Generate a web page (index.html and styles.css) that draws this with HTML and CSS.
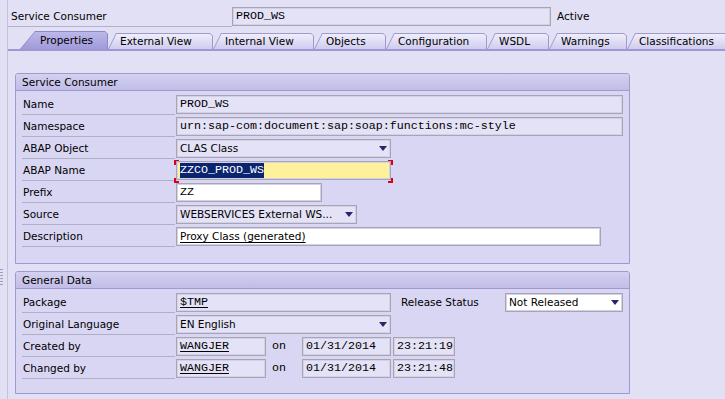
FILE: index.html
```html
<!DOCTYPE html>
<html lang="en">
<head>
    <meta charset="UTF-8">
    <title>Service Consumer</title>
    <link rel="stylesheet" href="styles.css">
</head>
<body>

    <div class="side"><div class="grip"></div></div>

    <div class="main">
        <!-- Header line -->
        <div class="head">
            <div class="head-label">Service Consumer</div>
            <div class="fld mono head-fld">PROD_WS</div>
            <div class="status">Active</div>
        </div>

        <!-- Tab strip -->
        <div class="tabs">
            <div class="tab active t-props"><span>Properties</span></div>
            <div class="tab t-ext"><span>External View</span></div>
            <div class="tab t-int"><span>Internal View</span></div>
            <div class="tab t-obj"><span>Objects</span></div>
            <div class="tab t-conf"><span>Configuration</span></div>
            <div class="tab t-wsdl"><span>WSDL</span></div>
            <div class="tab t-warn"><span>Warnings</span></div>
            <div class="tab t-class"><span>Classifications</span></div>
        </div>

        <div class="panel">
            <!-- Service Consumer group -->
            <div class="group">
                <div class="group-title">Service Consumer</div>
                <div class="group-body">
                    <div class="row">
                        <div class="lbl">Name</div>
                        <div class="fld mono f-wide">PROD_WS</div>
                    </div>
                    <div class="row">
                        <div class="lbl">Namespace</div>
                        <div class="fld mono f-wide">urn:sap-com:document:sap:soap:functions:mc-style</div>
                    </div>
                    <div class="row">
                        <div class="lbl">ABAP Object</div>
                        <div class="fld dd f-mid">CLAS Class</div>
                    </div>
                    <div class="row">
                        <div class="lbl">ABAP Name</div>
                        <div class="focus">
                            <div class="fld mono edit-hi f-mid"><span class="sel">ZZCO_PROD_WS</span></div>
                        </div>
                    </div>
                    <div class="row">
                        <div class="lbl">Prefix</div>
                        <div class="fld mono edit f-prefix">ZZ</div>
                    </div>
                    <div class="row">
                        <div class="lbl">Source</div>
                        <div class="fld dd f-source">WEBSERVICES External WS...</div>
                    </div>
                    <div class="row">
                        <div class="lbl">Description</div>
                        <div class="fld edit f-desc"><u>Proxy Class (generated)</u></div>
                    </div>
                </div>
            </div>

            <!-- General Data group -->
            <div class="group group-gap">
                <div class="group-title">General Data</div>
                <div class="group-body short">
                    <div class="row">
                        <div class="lbl">Package</div>
                        <div class="fld mono f-mid"><u>$TMP</u></div>
                        <div class="side-lbl">Release Status</div>
                        <div class="fld dd edit f-status">Not Released</div>
                    </div>
                    <div class="row">
                        <div class="lbl">Original Language</div>
                        <div class="fld dd f-mid">EN English</div>
                    </div>
                    <div class="row">
                        <div class="lbl">Created by</div>
                        <div class="fld mono f-user"><u>WANGJER</u></div>
                        <div class="on mono">on</div>
                        <div class="fld mono f-date">01/31/2014</div>
                        <div class="fld mono f-time">23:21:19</div>
                    </div>
                    <div class="row">
                        <div class="lbl">Changed by</div>
                        <div class="fld mono f-user"><u>WANGJER</u></div>
                        <div class="on mono">on</div>
                        <div class="fld mono f-date">01/31/2014</div>
                        <div class="fld mono f-time">23:21:48</div>
                    </div>
                </div>
            </div>
        </div>
    </div>

</body>
</html>
```

FILE: styles.css
```css
body {
    margin: 0;
    height: 399px;
    overflow: hidden;
    display: flex;
    background-color: #e2e0f4;
    font-family: "DejaVu Sans", Tahoma, sans-serif;
    font-size: 10.5px;
    color: #000;
}

.mono {
    font-family: "Liberation Mono", "Courier New", monospace;
    font-size: 11.67px;
}

u {
    text-underline-offset: 2px;
}

/* left splitter strip */
.side {
    width: 7px;
    flex: none;
    border-right: 1px solid #c4c2d9;
}

.grip {
    margin-top: 269px;
    width: 3px;
    height: 18px;
    background-image: repeating-linear-gradient(to bottom, #a09eb6 0 1px, transparent 1px 3px);
}

.main {
    flex: 1;
    min-width: 0;
    display: flex;
    flex-direction: column;
}

/* header line */
.head {
    height: 31px;
    box-sizing: border-box;
    padding-top: 7px;
    display: flex;
    align-items: flex-start;
}

.head-label {
    width: 224px;
    height: 20px;
    box-sizing: border-box;
    padding-left: 3px;
    line-height: 19px;
    border-bottom: 1px solid #b3b1c7;
}

.head-fld {
    width: 319px;
    margin-top: 0 !important;
}

.status {
    margin-left: 6px;
    line-height: 19px;
}

/* tabs */
.tabs {
    display: flex;
    align-items: flex-end;
    height: 18px;
    padding-left: 12px;
    border-bottom: 2px solid #9c97d5;
    overflow: hidden;
    white-space: nowrap;
}

.tab {
    position: relative;
    flex: none;
    box-sizing: border-box;
    height: 16px;
    padding-left: 12px;
    line-height: 16px;
}

.tab::before,
.tab::after {
    content: "";
    position: absolute;
}

.tab::before {
    inset: 0;
    background-color: #9e9aca;
    clip-path: polygon(0 100%, 8px 0, calc(100% - 3px) 0, 100% 3px, 100% 100%);
}

.tab::after {
    top: 1px;
    left: 1px;
    right: 1px;
    bottom: 0;
    background: linear-gradient(#efeefb, #cfccef);
    clip-path: polygon(0 100%, 7.5px 0, calc(100% - 2px) 0, 100% 2px, 100% 100%);
}

.tab span {
    position: relative;
    z-index: 1;
}

.tab.active {
    height: 18px;
    padding-left: 20px;
    line-height: 18px;
}

.tab.active::before {
    background-color: #8c87c5;
    clip-path: polygon(0 100%, 15px 0, calc(100% - 3px) 0, 100% 3px, 100% 100%);
}

.tab.active::after {
    background: linear-gradient(#bcb8ea, #a09bd9);
    clip-path: polygon(0 100%, 14px 0, calc(100% - 2px) 0, 100% 2px, 100% 100%);
}

.t-props { width: 88px; }
.t-ext { width: 105px; }
.t-int { width: 101px; }
.t-obj { width: 72px; }
.t-conf { width: 101px; }
.t-wsdl { width: 62px; }
.t-warn { width: 78px; }
.t-class { width: 110px; }

/* content panel */
.panel {
    flex: 1;
    padding: 22px 0 0 7px;
}

.group {
    width: 615px;
    box-sizing: border-box;
    border: 1px solid #9e9ad1;
    border-radius: 3px 3px 0 0;
    background-color: #d9d6f3;
}

.group-gap {
    margin-top: 7px;
}

.group-title {
    height: 16px;
    line-height: 16px;
    padding-left: 6px;
    border-bottom: 1px solid #9e9ad1;
    border-radius: 2px 2px 0 0;
    background: linear-gradient(#d3d0f0, #c1bde7);
}

.group-body {
    padding: 3px 6px 15px;
}

.group-body.short {
    padding-bottom: 13px;
}

.row {
    display: flex;
    height: 22px;
}

.lbl {
    width: 153px;
    height: 21px;
    box-sizing: border-box;
    margin-right: 1px;
    padding-left: 1px;
    line-height: 21px;
    border-bottom: 1px solid #b1afc6;
    white-space: nowrap;
}

/* input fields */
.fld {
    position: relative;
    flex: none;
    box-sizing: border-box;
    height: 19px;
    margin-top: 1px;
    padding-left: 3px;
    line-height: 17px;
    border: 1px solid #a6a4b5;
    box-shadow: inset 0 0 0 1px #d3d1e3;
    background-color: #e4e2f6;
    white-space: nowrap;
    overflow: hidden;
}

.fld.edit {
    background-color: #fff;
}

.fld.edit-hi {
    margin-top: 0;
    background-color: #fff09c;
}

.sel {
    display: inline-block;
    line-height: 15px;
    background-color: #0b2470;
    color: #fff;
}

.fld.dd {
    padding-right: 16px;
}

.fld.dd::after {
    content: "";
    position: absolute;
    right: 3px;
    top: 6px;
    border-left: 4.5px solid transparent;
    border-right: 4.5px solid transparent;
    border-top: 5px solid #2c2468;
}

/* red marks around the focused field */
.focus {
    display: flex;
    margin: 0 -2px -1px -2px;
    padding: 1px 2px 0;
    background:
        linear-gradient(#d8001c, #d8001c) left top / 5px 2px no-repeat,
        linear-gradient(#d8001c, #d8001c) left top / 2px 5px no-repeat,
        linear-gradient(#d8001c, #d8001c) right top / 5px 2px no-repeat,
        linear-gradient(#d8001c, #d8001c) right top / 2px 5px no-repeat,
        linear-gradient(#d8001c, #d8001c) left bottom / 5px 2px no-repeat,
        linear-gradient(#d8001c, #d8001c) left bottom / 2px 5px no-repeat,
        linear-gradient(#d8001c, #d8001c) right bottom / 5px 2px no-repeat,
        linear-gradient(#d8001c, #d8001c) right bottom / 2px 5px no-repeat;
}

.f-wide { width: 447px; }
.f-mid { width: 215px; }
.f-prefix { width: 146px; }
.f-source { width: 181px; }
.f-desc { width: 425px; }
.f-user { width: 90px; }
.f-date { width: 89px; }
.f-time { width: 62px; margin-left: 2px; }
.f-status { width: 118px; }

.side-lbl {
    width: 104px;
    margin-left: 10px;
    line-height: 21px;
}

.on {
    width: 36px;
    box-sizing: border-box;
    padding-left: 6px;
    line-height: 21px;
}
```
